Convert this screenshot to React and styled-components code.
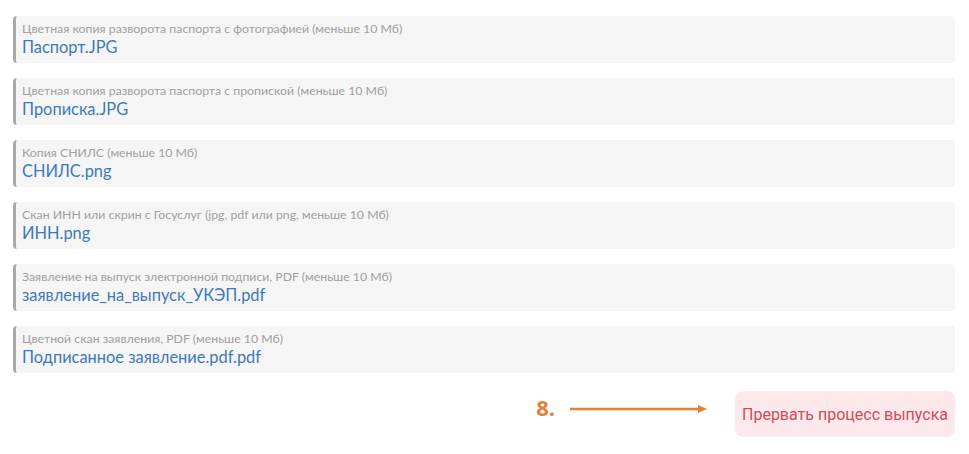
import React from "react";
import styled, { createGlobalStyle } from "styled-components";

const GlobalStyle = createGlobalStyle`
  html, body {
    margin: 0;
    padding: 0;
    background: #ffffff;
    font-family: Lato, "Open Sans", sans-serif;
  }
`;

const documents = [
  {
    label: "Цветная копия разворота паспорта с фотографией (меньше 10 Мб)",
    file: "Паспорт.JPG",
  },
  {
    label: "Цветная копия разворота паспорта с пропиской (меньше 10 Мб)",
    file: "Прописка.JPG",
  },
  {
    label: "Копия СНИЛС (меньше 10 Мб)",
    file: "СНИЛС.png",
  },
  {
    label: "Скан ИНН или скрин с Госуслуг (jpg, pdf или png, меньше 10 Мб)",
    file: "ИНН.png",
  },
  {
    label: "Заявление на выпуск электронной подписи, PDF (меньше 10 Мб)",
    file: "заявление_на_выпуск_УКЭП.pdf",
  },
  {
    label: "Цветной скан заявления, PDF (меньше 10 Мб)",
    file: "Подписанное заявление.pdf.pdf",
  },
];

const Page = styled.div`
  padding: 16px 14px 0 13px;
`;

const DocList = styled.div`
  display: flex;
  flex-direction: column;
  gap: 15px;
`;

const DocCard = styled.div`
  height: 47px;
  box-sizing: border-box;
  background: #f5f5f5;
  border-left: 3px solid #a9a9a9;
  border-radius: 4px;
  padding: 5px 0 0 6px;
  display: flex;
  flex-direction: column;
`;

const DocLabel = styled.span`
  font-size: 12.3px;
  line-height: 16px;
  color: #a0a0a0;
`;

const DocFile = styled.a`
  font-size: 16.4px;
  line-height: 20px;
  color: #3d7ab8;
  text-decoration: none;
`;

const Footer = styled.div`
  display: flex;
  align-items: center;
  justify-content: flex-end;
  margin-top: 18px;
`;

const StepNumber = styled.span`
  font-family: "Open Sans", Lato, sans-serif;
  font-weight: 700;
  font-size: 22px;
  color: #e08136;
  margin-top: -14px;
`;

const Arrow = styled.svg`
  margin: -10px 27px 0 15px;
  display: block;
`;

const AbortButton = styled.button`
  width: 220px;
  height: 46px;
  border: none;
  border-radius: 8px;
  background: #fde9eb;
  color: #d2495a;
  font-family: Roboto, Arial, sans-serif;
  font-size: 16px;
  cursor: pointer;
`;

const App = () => {
  return (
    <>
      <GlobalStyle />
      <Page>
        <DocList>
          {documents.map((doc) => (
            <DocCard key={doc.file}>
              <DocLabel>{doc.label}</DocLabel>
              <DocFile href="#">{doc.file}</DocFile>
            </DocCard>
          ))}
        </DocList>
        <Footer>
          <StepNumber>8.</StepNumber>
          <Arrow width="138" height="10" viewBox="0 0 138 10">
            <line x1="0" y1="5" x2="130" y2="5" stroke="#e08136" strokeWidth="2.5" />
            <polygon points="128,1 137,5 128,9" fill="#e08136" />
          </Arrow>
          <AbortButton>Прервать процесс выпуска</AbortButton>
        </Footer>
      </Page>
    </>
  );
};

export default App;
